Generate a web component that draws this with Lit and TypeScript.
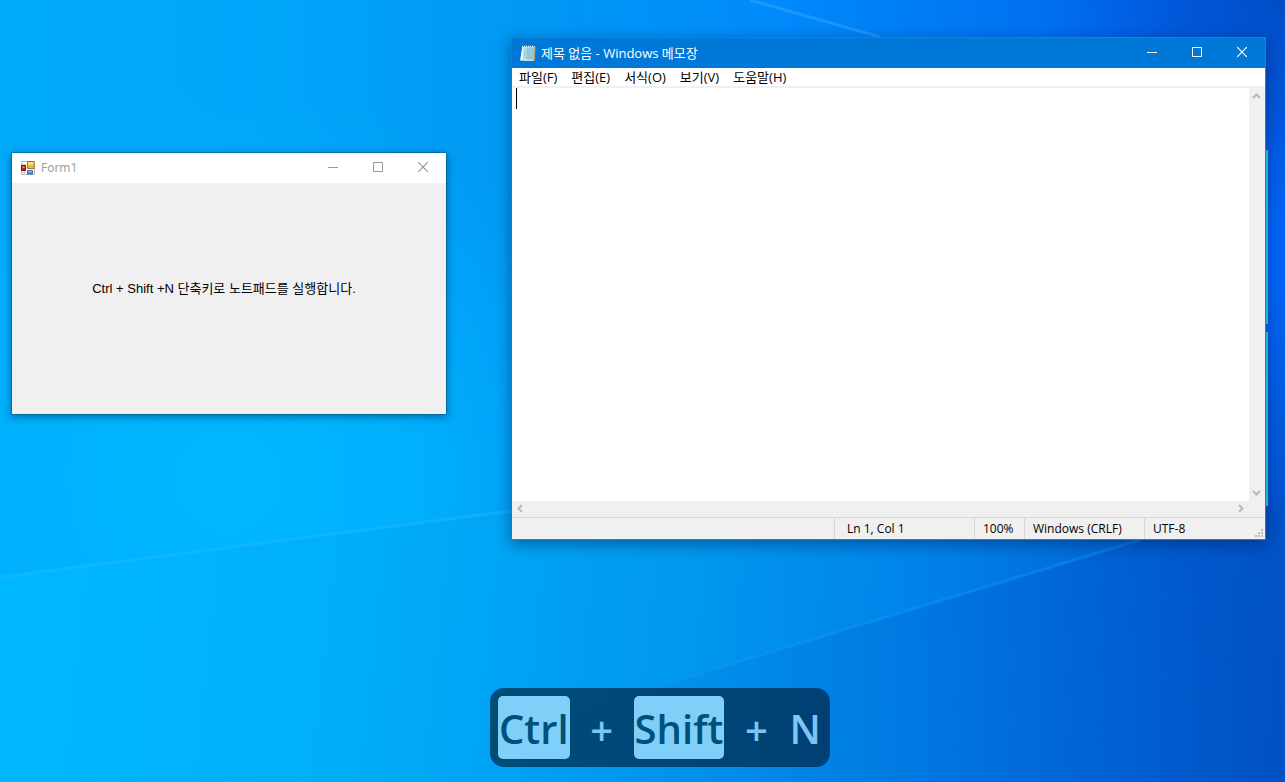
import { LitElement, html, svg, css } from "lit";
import { customElement, property } from "lit/decorators.js";

const WIN_FONT = css`"Open Sans", "Noto Sans CJK KR", sans-serif`;

@customElement("desktop-wallpaper")
class DesktopWallpaper extends LitElement {
  static styles = css`
    :host { display: block; }
    .art { display: block; width: 100%; height: 100%; }
  `;
  render() {
    return html`<svg class="art" viewBox="0 0 1285 782" preserveAspectRatio="none" aria-hidden="true">
      <defs>
        <linearGradient id="base" gradientUnits="userSpaceOnUse" x1="0" y1="300" x2="1285" y2="300">
          <stop offset="0" stop-color="#00acfa" />
          <stop offset="0.2" stop-color="#00a6f9" />
          <stop offset="0.38" stop-color="#009af3" />
          <stop offset="0.6" stop-color="#008bfb" />
          <stop offset="0.85" stop-color="#006bee" />
          <stop offset="1" stop-color="#0064f6" />
        </linearGradient>
        <radialGradient id="glow" gradientUnits="userSpaceOnUse" cx="230" cy="480" r="400">
          <stop offset="0" stop-color="#00b8ff" />
          <stop offset="0.5" stop-color="#00b4ff" stop-opacity="0.75" />
          <stop offset="1" stop-color="#00acff" stop-opacity="0" />
        </radialGradient>
        <linearGradient id="floor" gradientUnits="userSpaceOnUse" x1="0" y1="560" x2="1285" y2="700">
          <stop offset="0" stop-color="#00b8ff" />
          <stop offset="0.25" stop-color="#00b0f9" />
          <stop offset="0.4" stop-color="#00a3f4" />
          <stop offset="0.55" stop-color="#0096ee" />
          <stop offset="0.7" stop-color="#0084ea" />
          <stop offset="0.86" stop-color="#0068da" />
          <stop offset="1" stop-color="#0052c6" />
        </linearGradient>
        <radialGradient id="corner" gradientUnits="userSpaceOnUse" cx="1285" cy="0" r="230">
          <stop offset="0" stop-color="#0048bc" stop-opacity="0.85" />
          <stop offset="0.5" stop-color="#004cc8" stop-opacity="0.55" />
          <stop offset="1" stop-color="#0052d8" stop-opacity="0" />
        </radialGradient>
        <linearGradient id="side" gradientUnits="userSpaceOnUse" x1="0" y1="280" x2="0" y2="540">
          <stop offset="0" stop-color="#0052cc" stop-opacity="0" />
          <stop offset="1" stop-color="#0052c8" />
        </linearGradient>
        <linearGradient id="lower" gradientUnits="userSpaceOnUse" x1="520" y1="760" x2="1200" y2="560">
          <stop offset="0" stop-color="#0078dc" stop-opacity="0" />
          <stop offset="0.5" stop-color="#0068d4" stop-opacity="0.3" />
          <stop offset="1" stop-color="#0050c4" stop-opacity="0.45" />
        </linearGradient>
      </defs>
      <rect width="1285" height="782" fill="url(#base)" />
      <rect width="1285" height="782" fill="url(#glow)" />
      <rect x="1055" width="230" height="230" fill="url(#corner)" />
      <rect x="1180" y="280" width="105" height="260" fill="url(#side)" />
      <path d="M0 577L512 511L800 530H1285V782H0Z" fill="url(#floor)" />
      <path d="M1285 496L1140 540L640 692L340 782H1285Z" fill="url(#lower)" />
      <path d="M750 0L880 37" stroke="#30a4ff" stroke-width="3" opacity="0.55" />
      <path d="M0 577L512 511" stroke="#28bcff" stroke-width="3" opacity="0.4" />
      <path d="M640 692L1140 540" stroke="#1898f4" stroke-width="3" opacity="0.4" />
    </svg>`;
  }
}

@customElement("caption-buttons")
class CaptionButtons extends LitElement {
  static styles = css`
    :host { display: flex; }
    .btn {
      box-sizing: border-box; width: 45px; height: 30px; padding: 0 0 2px; border: 0; background: none; color: inherit;
      display: flex; align-items: center; justify-content: center; font: inherit;
    }
    .close { width: 46px; }
    .btn:hover { background: rgba(128, 128, 128, 0.25); }
    .glyph { display: block; width: 10px; height: 10px; fill: none; stroke: currentColor; }
  `;
  render() {
    return html`
      <button class="btn" aria-label="최소화"><svg class="glyph" viewBox="0 0 10 10"><path d="M0 5.500H10" /></svg></button>
      <button class="btn" aria-label="최대화"><svg class="glyph" viewBox="0 0 10 10"><path d="M.5 .5H9.500V9.500H.5Z" /></svg></button>
      <button class="btn close" aria-label="닫기"><svg class="glyph" viewBox="0 0 10 10"><path d="M0 0L10 10M10 0L0 10" stroke-width="1.200" /></svg></button>`;
  }
}

@customElement("form-window")
class FormWindow extends LitElement {
  static styles = css`
    :host {
      display: flex; flex-direction: column; box-sizing: border-box;
      border: 1px solid rgba(0, 70, 110, 0.4); background: #f0f0f0; background-clip: padding-box;
      box-shadow: 0 2px 8px rgba(0, 30, 70, 0.45);
      font: 12px/16px ${WIN_FONT};
    }
    .bar { display: flex; align-items: center; height: 30px; background: #fff; color: #999; padding-left: 8px; gap: 5px; }
    .icon { width: 16px; height: 16px; flex: none; }
    .name { flex: 1; }
    .body { flex: 1; display: grid; place-items: center; padding: 0 10px 20px 0; }
    .msg { margin: 0; color: #000; font: 13px/16px "Liberation Sans", "Noto Sans CJK KR", sans-serif; white-space: nowrap; }
  `;
  render() {
    return html`
      <header class="bar">
        <svg class="icon" viewBox="0 0 16 16" aria-hidden="true">
          <path d="M1.500 1.500H14.500V14.500H1.500Z" fill="#fff" stroke="#b4b4b4" />
          <path d="M1 4.500H6M4.500 11V15M1 12.500H6" stroke="#c8c8c8" />
          <path d="M7.500 1.500H14V8.500H7.500Z" fill="#f0bc34" stroke="#a87808" />
          <path d="M8 2H13.500V5H8Z" fill="#fae07c" />
          <path d="M1.500 5.500H5.500V10.500H1.500Z" fill="#b82820" stroke="#80100c" />
          <path d="M2.500 6.500H4.500V8H2.500Z" fill="#e89088" />
          <path d="M7.500 10.500H12.500V14H7.500Z" fill="#5b8ee8" stroke="#3a68c0" />
          <path d="M8 11H12V12H8Z" fill="#9cc0f8" />
        </svg>
        <span class="name">Form1</span>
        <caption-buttons></caption-buttons>
      </header>
      <main class="body"><p class="msg">Ctrl + Shift +N 단축키로 노트패드를 실행합니다.</p></main>`;
  }
}

const MENUS = ["파일(F)", "편집(E)", "서식(O)", "보기(V)", "도움말(H)"];

@customElement("notepad-window")
class NotepadWindow extends LitElement {
  static styles = css`
    :host {
      display: flex; flex-direction: column; box-sizing: border-box;
      border: 1px solid #1883d7; border-left-color: #0c80dc; background: #f0f0f0;
      box-shadow: 0 4px 14px rgba(0, 20, 60, 0.45);
      font: 12px/16px ${WIN_FONT}; color: #000;
    }
    .bar {
      display: flex; align-items: center; height: 30px; background: #0078d7; color: #fff;
      padding-left: 8px; gap: 5px; font-size: 13px;
    }
    .icon { width: 16px; height: 18px; flex: none; }
    .name { flex: 1; }
    .menu { display: flex; height: 18px; background: #fff; border-bottom: 2px solid #f0f0f0; }
    .item {
      height: 18px; border: 0; background: none; padding: 0 7px; font: inherit; font-size: 13px; line-height: 18px;
      color: inherit; white-space: nowrap;
    }
    .item:hover { background: #e5f3ff; }
    .work { flex: 1; display: grid; grid-template-columns: 1fr 16px; grid-template-rows: 1fr 16px; }
    .page { position: relative; display: flex; background: #fff; }
    .text {
      flex: 1; border: 0; outline: 0; resize: none; padding: 0 4px; background: none;
      font: 16px/21px ${WIN_FONT}; color: #000; caret-color: transparent; overflow: hidden;
    }
    .caret { position: absolute; left: 4px; top: 0; width: 1px; height: 21px; background: #000; }
    .track { display: flex; justify-content: space-between; }
    .v { flex-direction: column; padding: 1px 0; }
    .h { padding: 0 1px; }
    .step { width: 15px; height: 15px; padding: 0; border: 0; background: none; display: grid; place-items: center; }
    .chev { width: 9px; height: 9px; fill: none; stroke: #b9b9b9; stroke-width: 2; display: block; }
    .status {
      display: grid; grid-template-columns: 1fr 140px 50px 120px 121px; height: 21px;
      border-top: 1px solid #d7d7d7; position: relative;
    }
    .cell { border-left: 1px solid #d7d7d7; padding-left: 8px; line-height: 21px; white-space: nowrap; }
    .cell:first-child { border-left: 0; }
    .pos { padding-left: 12px; }
    .grip { position: absolute; right: 1px; bottom: 1px; width: 9px; height: 9px; fill: #bdbdbd; }
  `;
  private chevron(d: string, label: string) {
    return html`<button class="step" aria-label=${label}><svg class="chev" viewBox="0 0 9 9"><path d=${d} /></svg></button>`;
  }
  render() {
    return html`
      <header class="bar">
        <svg class="icon" viewBox="0 0 16 18" aria-hidden="true">
          <path d="M4 2.500H15.500L15 16.500L4 17Z" fill="#b59a72" />
          <path d="M2.500 2H14.500L13.500 16H.5Z" fill="#b4e0ea" />
          <path d="M7 2H14.500L13.500 16H6.500Z" fill="#7fc0cc" opacity=".65" />
          <path d="M2.500 2L.2 16.500L2.500 15L3.500 3Z" fill="#f6fcfd" />
          <path d="M.5 16.200H13.500" stroke="#eef8fa" />
          <path d="M3.500 5.500H13.500M3.500 7.500H13.500M3.500 9.500H13M3 11.500H13M3 13.500H13" stroke="#8cc8d2" stroke-width=".6" />
          <path d="M2.500 2.500H14.500" stroke="#e8f6f8" stroke-width="1.500" />
          <path d="M3.500 1V3M5.500 1V3M7.500 1V3M9.500 1V3M11.500 1V3M13.500 1V3" stroke="#5c6c70" stroke-width=".8" />
        </svg>
        <span class="name">제목 없음 - Windows 메모장</span>
        <caption-buttons></caption-buttons>
      </header>
      <nav class="menu">${MENUS.map((m) => html`<button class="item">${m}</button>`)}</nav>
      <div class="work">
        <div class="page"><textarea class="text" aria-label="본문" spellcheck="false"></textarea><span class="caret"></span></div>
        <div class="track v">
          ${this.chevron("M1 6L4.500 2.500L8 6", "위로")}
          ${this.chevron("M1 3L4.500 6.500L8 3", "아래로")}
        </div>
        <div class="track h">
          ${this.chevron("M6 1L2.500 4.500L6 8", "왼쪽")}
          ${this.chevron("M3 1L6.500 4.500L3 8", "오른쪽")}
        </div>
      </div>
      <footer class="status">
        <span class="cell"></span>
        <span class="cell pos">Ln 1, Col 1</span>
        <span class="cell">100%</span>
        <span class="cell">Windows (CRLF)</span>
        <span class="cell">UTF-8</span>
        <svg class="grip" viewBox="0 0 9 9" aria-hidden="true">
          ${[[6, 0], [3, 3], [6, 3], [0, 6], [3, 6], [6, 6]].map(([x, y]) => svg`<rect x=${x} y=${y} width="2" height="2" />`)}
        </svg>
      </footer>`;
  }
}

@customElement("key-overlay")
class KeyOverlay extends LitElement {
  @property({ attribute: false }) keys: string[] = [];
  static styles = css`
    :host {
      display: flex; align-items: center; padding: 8px; border-radius: 14px;
      background: rgba(0, 20, 40, 0.6); color: #7cc6f6;
      font: 600 40px/61px ${WIN_FONT};
    }
    .key { font: inherit; padding: 2px 1px 0; border-radius: 5px; }
    .mod { background: #80cff9; color: #00507c; }
    .plus { width: 64px; padding-top: 4px; text-align: center; line-height: 59px; }
  `;
  render() {
    return this.keys.map((k, i) => html`${i ? html`<span class="plus">+</span>` : ""}<kbd class="key ${k.length > 1 ? "mod" : ""}">${k}</kbd>`);
  }
}

@customElement("app-root")
class AppRoot extends LitElement {
  static styles = css`
    :host { display: block; position: relative; min-height: 100vh; overflow: hidden; background: #0098f0; }
    .wall { position: absolute; inset: 0; }
    .form { position: absolute; left: 11px; top: 152px; width: 436px; height: 263px; }
    .strips { position: absolute; left: 1266px; top: 150px; width: 2px; display: grid; gap: 8px; }
    .strip { height: 174px; background: #22b0cc; }
    .pad { position: absolute; left: 511px; top: 37px; width: 755px; height: 503px; }
    .keys { position: absolute; left: 490px; bottom: 15px; }
  `;
  render() {
    return html`
      <desktop-wallpaper class="wall"></desktop-wallpaper>
      <form-window class="form"></form-window>
      <notepad-window class="pad"></notepad-window>
      <div class="strips"><span class="strip"></span><span class="strip"></span></div>
      <key-overlay class="keys" .keys=${["Ctrl", "Shift", "N"]}></key-overlay>`;
  }
}
